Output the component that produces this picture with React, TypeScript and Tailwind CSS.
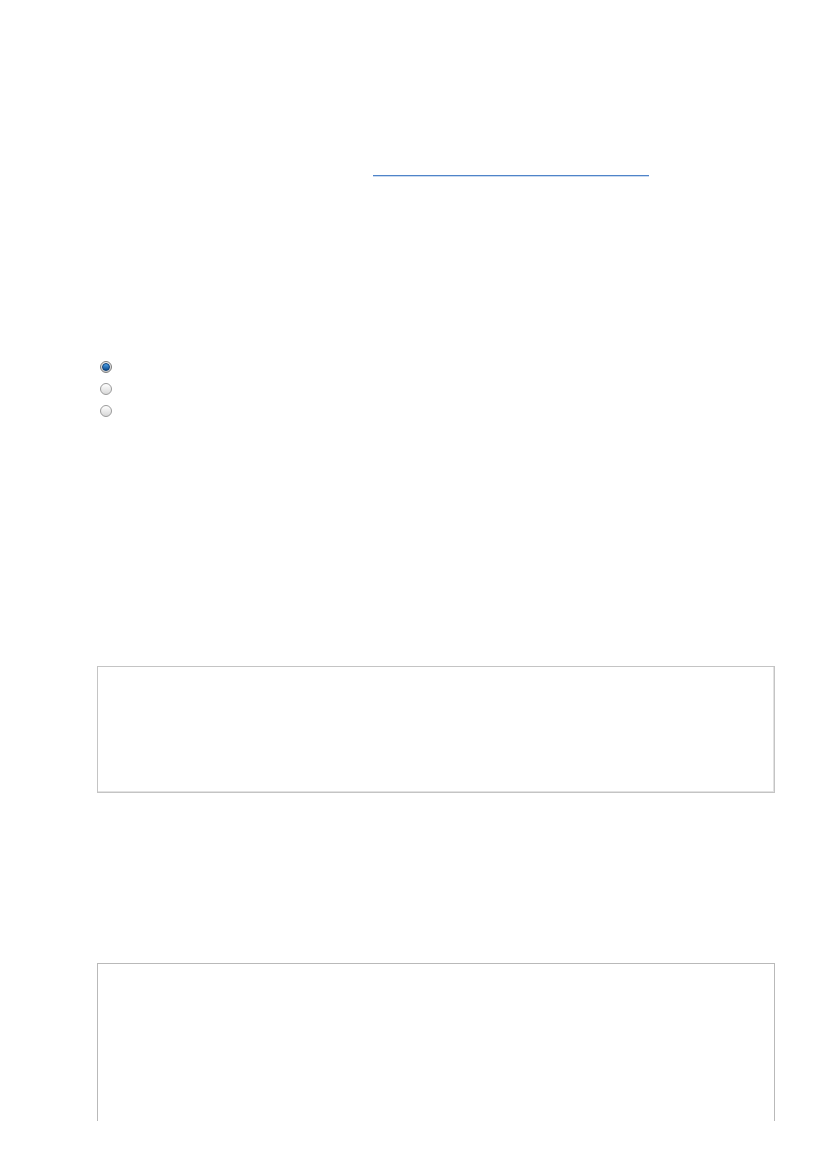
import React from 'react';

const Radio: React.FC<{ checked?: boolean }> = ({ checked }) => (
  <div
    className={`w-[12px] h-[12px] rounded-full border flex items-center justify-center ${
      checked
        ? 'border-[#7d7d7d] bg-gradient-to-b from-[#f2f2f2] to-[#c9c9c9]'
        : 'border-[#9a9a9a] bg-gradient-to-b from-[#ffffff] to-[#d8d8d8]'
    }`}
  >
    {checked && (
      <div className="w-[8px] h-[8px] rounded-full bg-gradient-to-b from-[#4ea3ea] to-[#0b4c8f] border border-[#0a3e78]" />
    )}
  </div>
);

const App: React.FC = () => {
  return (
    <div className="w-[827px] h-[1169px] overflow-hidden bg-white font-['Liberation_Sans',sans-serif]">
      <div className="pt-[175px] pl-[373px]">
        <div className="w-[276px] h-[2px] bg-[#4f84c9] border-b border-[#c9daf0]" />
      </div>

      <div className="mt-[184px] pl-[100px] flex flex-col gap-[10px]">
        <Radio checked />
        <Radio />
        <Radio />
      </div>

      <div className="mt-[249px] ml-[97px] w-[678px] h-[127px] border border-[#c4c4c4] shadow-[inset_-1px_-1px_0_#e2e2e2]" />

      <div className="mt-[170px] ml-[97px] w-[678px] h-[158px] border border-b-0 border-[#b9b9b9]" />
    </div>
  );
};

export default App;
